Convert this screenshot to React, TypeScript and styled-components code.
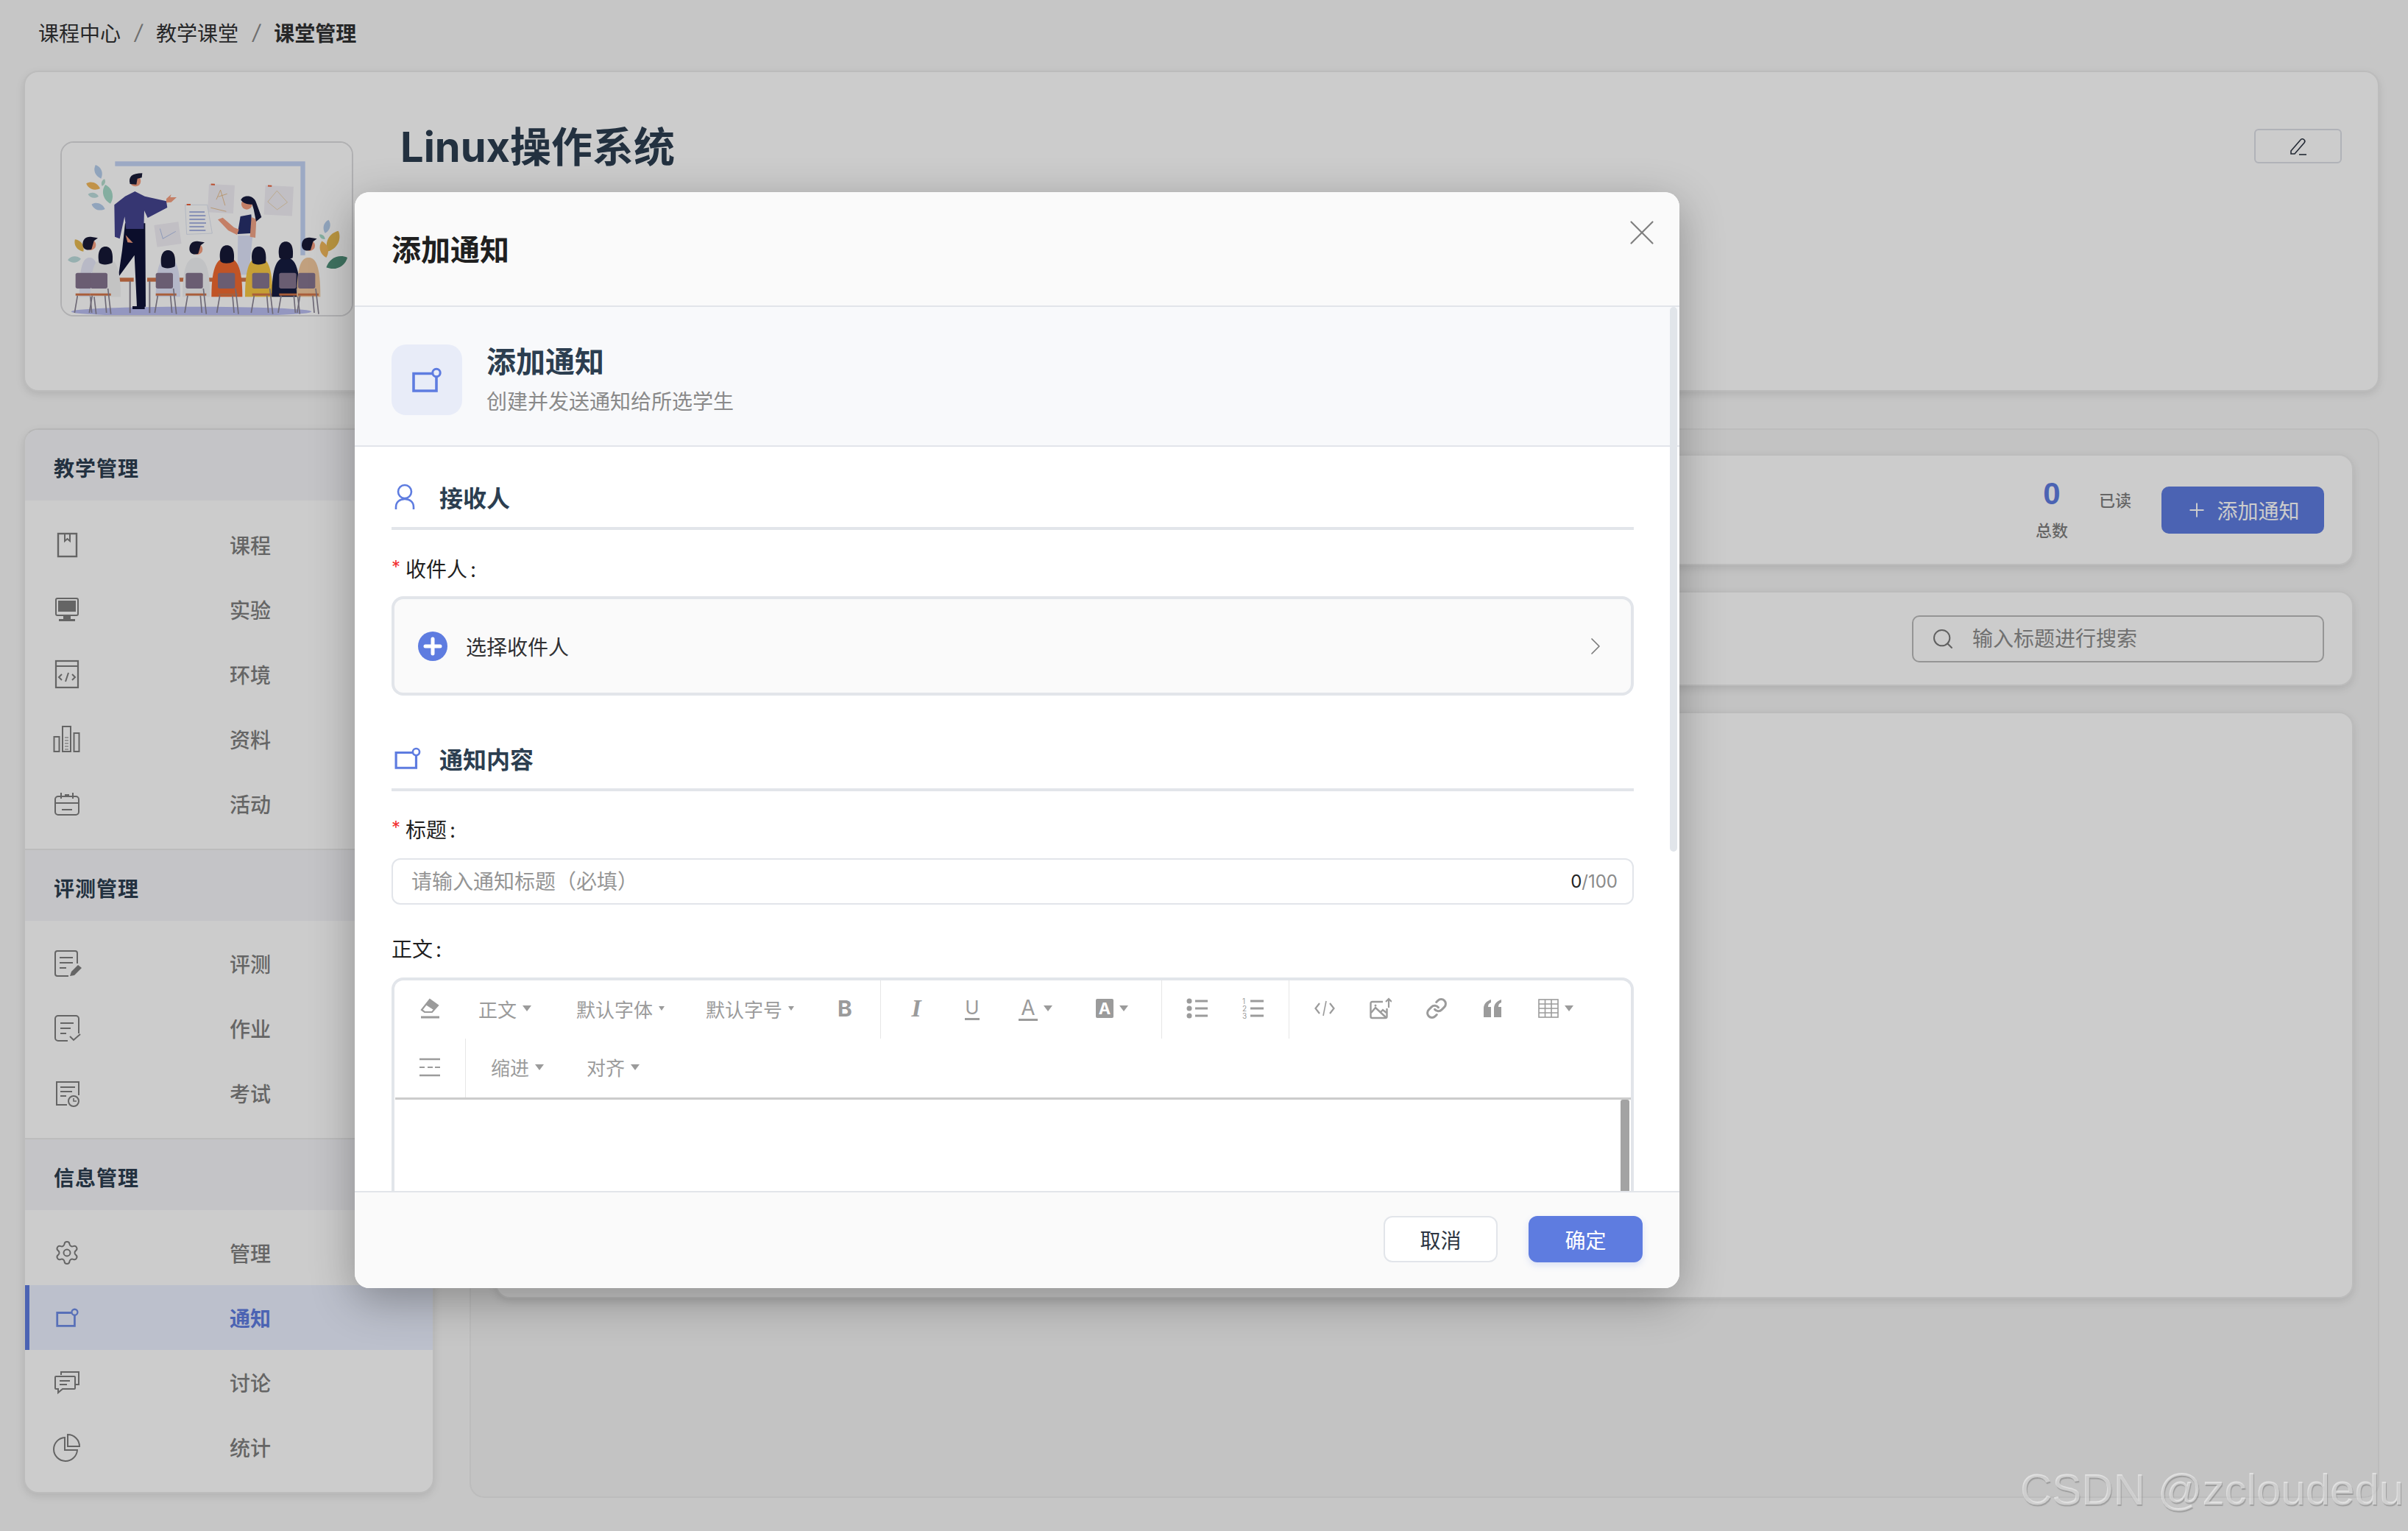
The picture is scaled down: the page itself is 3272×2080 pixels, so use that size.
import React from 'react';
import styled, { createGlobalStyle } from 'styled-components';
import { ChevronRight, Link as LinkIcon, Plus, Search, Settings, X } from 'lucide-react';

const BLUE = '#5e7ce0';
const INK = '#2c3e50';
const LINE = '#e2e5ea';
const MUTED = '#7f7f7f';
const TOOL = '#9b9b9b';

const GlobalStyle = createGlobalStyle`
  html, body {
    margin: 0;
    padding: 0;
    background: #f8f8f8;
  }
  * {
    box-sizing: border-box;
  }
  body {
    font-family: Inter, "Noto Sans CJK SC", sans-serif;
    font-size: 28px;
  }
`;

const NoticeIcon: React.FC<{ w: number; h: number; color?: string }> = ({ w, h, color = BLUE }) => (
  <svg width={w} height={h} viewBox="0 0 40 34" fill="none" stroke={color} strokeWidth="3.6">
    <path d="M27 8.5H2v23.5h31V13" />
    <circle cx="33" cy="7.5" r="5.2" strokeWidth="3" />
  </svg>
);

const SideIcon: React.FC<{ children: React.ReactNode; $color?: string }> = ({ children, $color = MUTED }) => (
  <svg width="40" height="40" viewBox="0 0 40 40" fill="none" stroke={$color} strokeWidth="2">
    {children}
  </svg>
);

const sideIcons: Record<string, React.ReactNode> = {
  book: (
    <SideIcon>
      <rect x="8" y="5" width="25" height="31" strokeWidth="2.4" />
      <path d="M17 5v10l3.5-3 3.5 3V5" />
    </SideIcon>
  ),
  monitor: (
    <SideIcon>
      <rect x="5" y="5" width="30" height="23" rx="2" strokeWidth="2" />
      <rect x="8" y="8" width="24" height="15" fill={MUTED} stroke="none" />
      <rect x="15" y="28" width="10" height="5" fill={MUTED} stroke="none" />
      <rect x="9" y="33" width="22" height="3" fill={MUTED} stroke="none" />
    </SideIcon>
  ),
  code: (
    <SideIcon>
      <rect x="5" y="2" width="30" height="36" strokeWidth="2.2" />
      <path d="M5 9h30" />
      <path d="M13 20l-4 4 4 4M27 20l4 4-4 4M22 18l-4 12" />
    </SideIcon>
  ),
  bars: (
    <SideIcon>
      <rect x="2.5" y="17" width="7" height="20" />
      <rect x="14" y="3" width="11" height="34" />
      <rect x="29.5" y="12" width="7" height="25" />
      <path d="M17 18h5M17 22h5M17 26h5M17 30h5M17 34h5" strokeWidth="1" />
    </SideIcon>
  ),
  calendar: (
    <SideIcon>
      <rect x="4" y="10" width="32" height="25" rx="4" />
      <path d="M12 5v8M28 5v8M17 8h6M4 19h32M13 28h14" />
    </SideIcon>
  ),
  docPen: (
    <SideIcon>
      <path d="M22 37H7a3 3 0 0 1-3-3V6a3 3 0 0 1 3-3h24a3 3 0 0 1 3 3v14" />
      <path d="M10 12h18M10 19h18M10 26h9" />
      <path d="M24 37l2-6 9-9 5 4-10 10z" fill={MUTED} stroke="none" />
    </SideIcon>
  ),
  docCheck: (
    <SideIcon>
      <path d="M21 37H8a4 4 0 0 1-4-4V7a4 4 0 0 1 4-4h24a4 4 0 0 1 4 4v20" />
      <path d="M11 13h18M11 20h14M11 27h8" />
      <path d="M24 31l5 5 9-8" />
    </SideIcon>
  ),
  docClock: (
    <SideIcon>
      <path d="M20 36H6V5h30v18" />
      <path d="M11 12h20M11 18h16M11 24h8" />
      <circle cx="29" cy="31" r="7" />
      <path d="M29 27v4h4" strokeWidth="1.6" />
    </SideIcon>
  ),
  gear: <Settings size={36} strokeWidth={1.3} color={MUTED} />,
  notice: <NoticeIcon w={31} h={26} color="#6f8ce6" />,
  chat: (
    <SideIcon>
      <path d="M12 10V6h24v17h-5" />
      <path d="M5 12h25a1 1 0 0 1 1 1v15a1 1 0 0 1-1 1H14l-6 5v-5H5a1 1 0 0 1-1-1V13a1 1 0 0 1 1-1z" />
      <path d="M10 18h14M10 23h10" />
    </SideIcon>
  ),
  pie: (
    <SideIcon>
      <path d="M17 7a16 16 0 1 0 17 17H17z" />
      <path d="M21 3v16h16A16 16 0 0 0 21 3z" />
    </SideIcon>
  ),
};

type NavGroup = { title: string; items: { label: string; icon: string; active?: boolean }[] };

const navGroups: NavGroup[] = [
  {
    title: '教学管理',
    items: [
      { label: '课程', icon: 'book' },
      { label: '实验', icon: 'monitor' },
      { label: '环境', icon: 'code' },
      { label: '资料', icon: 'bars' },
      { label: '活动', icon: 'calendar' },
    ],
  },
  {
    title: '评测管理',
    items: [
      { label: '评测', icon: 'docPen' },
      { label: '作业', icon: 'docCheck' },
      { label: '考试', icon: 'docClock' },
    ],
  },
  {
    title: '信息管理',
    items: [
      { label: '管理', icon: 'gear' },
      { label: '通知', icon: 'notice', active: true },
      { label: '讨论', icon: 'chat' },
      { label: '统计', icon: 'pie' },
    ],
  },
];

const students = [
  { x: 185, y: 482, top: '#e6e8f8', w: 84, hair: 'short', chair: 128 },
  { x: 250, y: 515, top: '#f4f4f4', w: 124, hair: 'long', chair: 188 },
  { x: 505, y: 530, top: '#e2e5fa', w: 100, hair: 'long', chair: 455 },
  { x: 620, y: 500, top: '#f2f3f5', w: 112, hair: 'short', chair: 577 },
  { x: 745, y: 510, top: '#f06a30', w: 126, hair: 'long', chair: 708 },
  { x: 875, y: 515, top: '#f7c744', w: 112, hair: 'long', chair: 848 },
  { x: 985, y: 495, top: '#161c40', w: 114, hair: 'long', chair: 958 },
  { x: 1078, y: 485, top: '#f2c99e', w: 96, hair: 'short', chair: 1035 },
];

const Leaf: React.FC<{ x: number; y: number; r: number; l: number; c: string }> = ({ x, y, r, l, c }) => (
  <path
    transform={`translate(${x} ${y}) rotate(${r})`}
    d={`M0 0C${l * 0.3} ${-l * 0.32} ${l * 0.75} ${-l * 0.3} ${l} 0C${l * 0.75} ${l * 0.3} ${l * 0.3} ${l * 0.32} 0 0z`}
    fill={c}
  />
);

const Poster: React.FC<{ x: number; y: number; w: number; h: number; r: number; children?: React.ReactNode }> = ({ x, y, w, h, r, children }) => (
  <g transform={`rotate(${r} ${x} ${y})`}>
    <rect x={x} y={y} width={w} height={h} fill="#f2eff6" />
    {children}
  </g>
);

const Classroom: React.FC = () => (
  <svg width="100%" height="100%" viewBox="72 72 1182 702" preserveAspectRatio="none">
    <rect x="66" y="66" width="1194" height="714" fill="#ffffff" />
    <path d="M289 148h775v382h-19V167H289z" fill="#c4d4f6" />
    <ellipse cx="600" cy="760" rx="490" ry="20" fill="#b9bdf0" />
    <Leaf x={232} y={218} r={-112} l={60} c="#b5cdec" />
    <Leaf x={228} y={258} r={-160} l={60} c="#f2b85c" />
    <Leaf x={236} y={248} r={-70} l={30} c="#b4dccd" />
    <Leaf x={270} y={320} r={-105} l={80} c="#a5dac8" />
    <Leaf x={222} y={290} r={-170} l={44} c="#bcdcdc" />
    <Leaf x={248} y={342} r={-160} l={58} c="#b5cdec" />
    <Leaf x={1145} y={440} r={-75} l={56} c="#b5cdec" />
    <Leaf x={1155} y={515} r={-62} l={95} c="#e6b950" />
    <Leaf x={1150} y={540} r={-105} l={70} c="#f2b85c" />
    <Leaf x={1150} y={580} r={-25} l={95} c="#4f8f78" />
    <Leaf x={1145} y={465} r={-140} l={30} c="#a5dac8" />
    <Leaf x={160} y={515} r={-125} l={60} c="#e6b950" />
    <Leaf x={150} y={545} r={175} l={54} c="#bcdcdc" />
    <Poster x={672} y={240} w={105} h={115} r={3}>
      <rect x="680" y="238" width="16" height="6" fill="#e9613a" />
      <path d="M705 302l15-40 22 62M712 290l36-14M684 336l64 12" stroke="#e0a860" strokeWidth="2" fill="none" />
    </Poster>
    <Poster x={902} y={245} w={115} h={120} r={3}>
      <rect x="912" y="244" width="16" height="6" fill="#e9613a" />
      <path d="M950 265l45 45-40 32-40-30z" stroke="#e8c890" strokeWidth="2" fill="none" />
    </Poster>
    <Poster x={448} y={408} w={100} h={90} r={-8}>
      <path d="M470 425l6 42 56-22" stroke="#b5c4e8" strokeWidth="3" fill="none" />
    </Poster>
    <g>
      <path d="M575 325l90 0 20 116-104 4z" fill="#ffffff" stroke="#cfd8ec" strokeWidth="2" />
      <rect x="581" y="321" width="16" height="6" fill="#e9613a" />
      <path d="M592 354h62M592 369h66M592 384h64M592 399h68M592 414h60M592 429h66" stroke="#8f9fdc" strokeWidth="5" />
    </g>
    <path d="M330 400h82l2 340h-36l-10-210-66 90 16-110z" fill="#0e1236" />
    <path d="M330 290l40-20 40 20 88 20 4 26-80 42-14-30-2 75h-72l-6-50-20 90-20-8-2-130z" fill="#44448f" />
    <circle cx="372" cy="228" r="22" fill="#f59f80" />
    <path d="M350 240c-8-30 8-44 50-44l-2 18-18 4-4 24z" fill="#1a1c38" />
    <path d="M498 300l20-18-4 12 26 0-22 20-20 2z" fill="#f59f80" />
    <path d="M332 448l30 32-22-2z" fill="#f59f80" />
    <path d="M360 738h50v12h-50z" fill="#0e1236" />
    <path d="M790 450h60l-16 160h-46z" fill="#dfe4fa" />
    <path d="M800 372l44-8 6 76-62 4z" fill="#27306c" />
    <path d="M708 385l20-8 46 40 20 8-8 22-36-18z" fill="#f59f80" />
    <path d="M845 375l20 8-4 76-22-4z" fill="#f0a488" />
    <circle cx="826" cy="322" r="22" fill="#f59f80" />
    <path d="M802 305c8-20 50-24 62 10l22 60-22 18-10-50-6-20c-16 0-34-2-46-18z" fill="#161a3c" />
    <rect x="298" y="622" width="67" height="16" fill="#d4764a" />
    <rect x="420" y="622" width="410" height="16" fill="#d4764a" />
    <path d="M350 636v130M430 636v130" stroke="#8a8494" strokeWidth="6" />
    {students.map((s) => (
      <g key={s.x}>
        <path d={`M${s.x - s.w / 2} 700c0-130 ${s.w * 0.2}-160 ${s.w / 2}-160s${s.w / 2} 30 ${s.w / 2} 160z`} fill={s.top} />
        <circle cx={s.x + 4} cy={s.y + 6} r="22" fill="#f59f80" />
        {s.hair === 'short' ? (
          <path d={`M${s.x - 28} ${s.y + 6}c0-26 16-36 38-32l24 4-16 12-10 34c-20 6-34 0-36-18z`} fill="#181a36" />
        ) : (
          <path d={`M${s.x - 26} ${s.y + 46}c-8-34 0-66 26-66s32 30 28 66c-18 10-44 10-54 0z`} fill="#161836" />
        )}
        <rect x={s.chair} y="602" width="70" height="64" rx="8" fill="#85758f" />
        <rect x={s.chair} y="686" width="84" height="9" fill="#d4764a" />
        <path d={`M${s.chair + 8} 695l-12 70M${s.chair + 72} 666l12 104M${s.chair + 60} 695l6 70`} stroke="#8a8494" strokeWidth="5" fill="none" />
      </g>
    ))}
  </svg>
);

const Page = styled.div`
  width: 3272px;
  height: 2080px;
  padding: 0 39px 0 32px;
  overflow: hidden;
  position: relative;
  background: #f8f8f8;
`;

const Crumbs = styled.nav`
  height: 96px;
  padding: 0 0 8px 20px;
  display: flex;
  align-items: center;
  color: #303133;
  font-size: 28px;
`;

const CrumbSep = styled.span`
  margin: 0 19px;
  color: #8a8a8a;
  font-style: italic;
`;

const CrumbCurrent = styled.span`
  font-weight: 600;
`;

const CourseCard = styled.section`
  height: 436px;
  border: 2px solid #ebebeb;
  border-radius: 20px;
  background: #fff;
  box-shadow: 0 4px 12px rgba(0, 0, 0, 0.1);
  padding: 94px 49px 0 48px;
  display: flex;
  align-items: flex-start;
`;

const Cover = styled.div`
  width: 398px;
  height: 238px;
  border: 2px solid #dddddf;
  border-radius: 18px;
  overflow: hidden;
  flex: none;
`;

const CourseTitle = styled.h1`
  margin: -28px 0 0 64px;
  flex: 1;
  font-size: 56px;
  line-height: 72px;
  font-weight: 700;
  color: ${INK};
`;

const EditButton = styled.button`
  width: 119px;
  height: 47px;
  margin-top: -17px;
  border: 2px solid #dcdfe6;
  border-radius: 6px;
  background: #fff;
  display: flex;
  align-items: center;
  justify-content: center;
  padding: 0;
`;

const MainRow = styled.div`
  margin-top: 50px;
  height: 1453px;
  display: flex;
  gap: 48px;
  align-items: flex-start;
`;

const Sidebar = styled.aside`
  width: 558px;
  flex: none;
  height: 1447px;
  border: 2px solid #ebebeb;
  border-top-color: #e4e4e4;
  border-radius: 20px;
  background: #fff;
  box-shadow: 0 4px 12px rgba(0, 0, 0, 0.1);
  overflow: hidden;
`;

const NavBlock = styled.div<{ $last?: boolean }>`
  padding-bottom: ${(p) => (p.$last ? 0 : 17)}px;
  border-bottom: ${(p) => (p.$last ? 'none' : '2px solid #ebebeb')};
`;

const NavTitle = styled.div<{ $first?: boolean }>`
  height: 96px;
  padding: 6px 0 0 39px;
  display: flex;
  align-items: center;
  background: #f5f6f9;
  font-size: 28px;
  letter-spacing: 1px;
  font-weight: 600;
  color: ${INK};
  margin-bottom: ${(p) => (p.$first ? 16 : 14)}px;
`;

const NavItem = styled.div<{ $active?: boolean }>`
  height: 88px;
  display: grid;
  grid-template-columns: 40px 1fr;
  column-gap: 201px;
  align-items: center;
  padding-left: ${(p) => (p.$active ? 31 : 37)}px;
  border-left: ${(p) => (p.$active ? `6px solid #5e7ce0` : 'none')};
  background: ${(p) => (p.$active ? '#ebf0ff' : 'transparent')};
  color: ${(p) => (p.$active ? BLUE : MUTED)};
  font-size: 28px;
  font-weight: ${(p) => (p.$active ? 600 : 500)};
`;

const NavGlyph = styled.span`
  width: 40px;
  height: 40px;
  display: flex;
  align-items: center;
  justify-content: center;
`;

const ContentPanel = styled.main`
  flex: 1;
  height: 1453px;
  background: #f4f4f4;
  border: 2px solid #ebebeb;
  border-radius: 20px;
  padding: 33px 33px 0 33px;
  display: flex;
  flex-direction: column;
  gap: 35px;
`;

const PanelCard = styled.div<{ $h: number }>`
  height: ${(p) => p.$h}px;
  flex: none;
  background: #fff;
  border: 2px solid #ebebeb;
  border-radius: 20px;
  box-shadow: 0 4px 12px rgba(0, 0, 0, 0.1);
  padding-right: 38px;
  display: flex;
  align-items: center;
  justify-content: flex-end;
`;

const StatBlock = styled.div`
  width: 60px;
  margin-top: -1px;
  display: flex;
  flex-direction: column;
  align-items: center;
  gap: 12px;
`;

const StatValue = styled.div`
  font-size: 42px;
  line-height: 46px;
  font-weight: 700;
  color: ${BLUE};
  font-family: "Liberation Sans", sans-serif;
`;

const StatLabel = styled.div<{ $raised?: boolean }>`
  font-size: 22px;
  line-height: 30px;
  font-weight: 500;
  color: ${MUTED};
  white-space: nowrap;
  margin: ${(p) => (p.$raised ? '0 41px 26px 34px' : 0)};
`;

const AddButton = styled.button`
  width: 221px;
  height: 64px;
  border: none;
  border-radius: 10px;
  background: ${BLUE};
  color: #fff;
  font: inherit;
  font-size: 28px;
  padding: 0;
  display: flex;
  align-items: center;
  justify-content: center;
  gap: 12px;
`;

const SearchBox = styled.label`
  width: 560px;
  height: 64px;
  border: 2px solid #bbbbbb;
  border-radius: 10px;
  background: #fff;
  display: flex;
  align-items: center;
  padding-left: 24px;
  gap: 24px;
`;

const SearchInput = styled.input`
  flex: 1;
  min-width: 0;
  border: none;
  background: transparent;
  outline: none;
  padding: 0;
  font: inherit;
  font-size: 28px;
  &::placeholder {
    color: #8c8c8c;
    opacity: 1;
  }
`;

const Overlay = styled.div`
  position: absolute;
  inset: 0;
  background: rgba(0, 0, 0, 0.2);
`;

const Modal = styled.div`
  position: absolute;
  left: 482px;
  top: 261px;
  width: 1800px;
  height: 1489px;
  border-radius: 20px;
  background: #fff;
  box-shadow: 0 16px 60px rgba(0, 0, 0, 0.3);
  overflow: hidden;
  display: flex;
  flex-direction: column;
`;

const ModalHeader = styled.header`
  height: 156px;
  flex: none;
  border-bottom: 2px solid ${LINE};
  background: #fafafa;
  padding: 0 22px 0 50px;
  display: flex;
  align-items: flex-start;
  justify-content: space-between;
`;

const ModalTitle = styled.h2`
  margin: 51px 0 0;
  font-size: 40px;
  line-height: 56px;
  font-weight: 600;
  color: #1f1f1f;
`;

const CloseGlyph = styled.span`
  margin-top: 26px;
  color: #7f7f7f;
  display: flex;
`;

const ModalBody = styled.div`
  flex: 1;
  min-height: 0;
  overflow: hidden;
  position: relative;
`;

const ScrollThumb = styled.div`
  position: absolute;
  top: 0;
  right: 3px;
  width: 10px;
  height: 740px;
  border-radius: 6px;
  background: #e1e5ea;
`;

const Hero = styled.div`
  height: 190px;
  padding: 51px 0 0 50px;
  border-bottom: 2px solid ${LINE};
  background: #f8f9fb;
  display: flex;
  align-items: flex-start;
  gap: 33px;
`;

const HeroIcon = styled.div`
  width: 96px;
  height: 96px;
  border-radius: 20px;
  background: #e8ecf8;
  display: flex;
  align-items: center;
  justify-content: center;
  flex: none;
`;

const HeroText = styled.div`
  display: flex;
  flex-direction: column;
  margin-top: -4px;
`;

const HeroTitle = styled.div`
  font-size: 40px;
  line-height: 56px;
  font-weight: 600;
  color: ${INK};
`;

const HeroSub = styled.div`
  font-size: 28px;
  line-height: 40px;
  margin-top: 6px;
  color: #8a8a8a;
`;

const Form = styled.div`
  padding: 0 62px 0 50px;
`;

const SectionHead = styled.div<{ $top: number }>`
  margin-top: ${(p) => p.$top}px;
  height: 83px;
  padding-bottom: 4px;
  border-bottom: 4px solid ${LINE};
  display: flex;
  align-items: center;
`;

const SectionIcon = styled.span`
  width: 65px;
  flex: none;
  display: flex;
  padding-left: 4px;
`;

const SectionTitle = styled.span`
  font-size: 32px;
  font-weight: 600;
  color: ${INK};
`;

const FieldLabel = styled.div<{ $top: number }>`
  margin-top: ${(p) => p.$top}px;
  height: 40px;
  line-height: 40px;
  display: flex;
  font-size: 28px;
  color: #1f1f1f;
`;

const Star = styled.span`
  color: #f23030;
  width: 19px;
  flex: none;
  font-size: 24px;
  line-height: 34px;
`;

const Colon = styled.span`
  margin-left: 4px;
`;

const Picker = styled.div<{ $top: number }>`
  margin-top: ${(p) => p.$top}px;
  height: 135px;
  border: 4px solid ${LINE};
  border-radius: 16px;
  background: #fafafa;
  padding: 0 28px 0 32px;
  display: flex;
  align-items: center;
  gap: 25px;
  color: #303133;
`;

const PickerText = styled.span`
  flex: 1;
`;

const TitleInputWrap = styled.div`
  margin-top: 18px;
  height: 63px;
  border: 2px solid ${LINE};
  border-radius: 12px;
  padding: 0 20px 0 25px;
  display: flex;
  align-items: center;
`;

const TitleInput = styled.input`
  flex: 1;
  min-width: 0;
  border: none;
  outline: none;
  padding: 0;
  font: inherit;
  font-size: 28px;
  &::placeholder {
    color: #959595;
    opacity: 1;
  }
`;

const Counter = styled.span`
  font-size: 24px;
  color: #8a8a8a;
`;

const CounterNow = styled.span`
  color: #222;
`;

const Editor = styled.div`
  margin-top: 18px;
  height: 560px;
  border: 4px solid ${LINE};
  border-bottom: none;
  border-radius: 16px 16px 0 0;
  position: relative;
`;

const ToolRow = styled.div<{ $h: number }>`
  height: ${(p) => p.$h}px;
  padding-left: 10px;
  display: flex;
  align-items: stretch;
`;

const ToolSep = styled.span`
  width: 1px;
  background: #e6e6e6;
  margin: 0 10px;
  flex: none;
`;

const ToolButton = styled.span`
  width: 76px;
  flex: none;
  padding-bottom: 3px;
  display: flex;
  align-items: center;
  justify-content: center;
  color: ${TOOL};
`;

const ToolDrop = styled.span<{ $w: number; $pad?: number }>`
  width: ${(p) => p.$w}px;
  flex: none;
  padding-left: ${(p) => p.$pad ?? 28}px;
  padding-bottom: 3px;
  display: flex;
  align-items: center;
  gap: 8px;
  font-size: 26px;
  color: ${TOOL};
`;

const Caret = styled.span<{ $small?: boolean }>`
  width: 0;
  height: 0;
  flex: none;
  border-style: solid;
  border-color: ${TOOL} transparent transparent;
  border-width: ${(p) => (p.$small ? '6px 4px 0' : '8px 6px 0')};
`;

const BoldGlyph = styled.span`
  font-size: 30px;
  font-weight: 700;
`;

const ItalicGlyph = styled.span`
  font-family: "Liberation Serif", serif;
  font-size: 34px;
  font-style: italic;
  font-weight: 700;
`;

const UnderGlyph = styled.span`
  font-size: 26px;
  line-height: 28px;
  border-bottom: 3px solid ${TOOL};
`;

const ColorGlyph = styled.span`
  width: 26px;
  text-align: center;
  font-size: 28px;
  line-height: 30px;
  border-bottom: 3px solid ${TOOL};
`;

const FillGlyph = styled.span`
  width: 24px;
  height: 26px;
  border-radius: 2px;
  background: ${TOOL};
  color: #fff;
  font-size: 22px;
  font-weight: 700;
  line-height: 26px;
  text-align: center;
`;

const EditorText = styled.div`
  border-top: 3px solid #cccccc;
  margin-left: 1px;
  height: 400px;
  position: relative;
`;

const EditorThumb = styled.div`
  position: absolute;
  top: 0;
  right: 2px;
  width: 12px;
  height: 300px;
  border-radius: 3px 3px 0 0;
  background: #a3a3a3;
`;

const ModalFooter = styled.footer`
  height: 132px;
  flex: none;
  border-top: 2px solid ${LINE};
  background: #fafafa;
  padding: 32px 50px 0 0;
  display: flex;
  justify-content: flex-end;
  align-items: flex-start;
  gap: 42px;
`;

const FooterButton = styled.button<{ $primary?: boolean }>`
  width: 155px;
  height: 63px;
  border: ${(p) => (p.$primary ? 'none' : `2px solid ${LINE}`)};
  border-radius: 12px;
  background: ${(p) => (p.$primary ? BLUE : '#fff')};
  color: ${(p) => (p.$primary ? '#fff' : '#2c3442')};
  box-shadow: ${(p) => (p.$primary ? '0 4px 10px rgba(94, 124, 224, 0.2)' : 'none')};
  font: inherit;
  font-size: 28px;
  padding: 0;
`;

const Watermark = styled.div`
  position: absolute;
  left: 2745px;
  top: 1989px;
  font-family: "Liberation Sans", sans-serif;
  font-size: 60px;
  line-height: 70px;
  white-space: nowrap;
  color: rgba(255, 255, 255, 0.5);
  text-shadow: 1px 2px 1px rgba(0, 0, 0, 0.2);
`;

const Svg28: React.FC<{ children: React.ReactNode; w?: number; h?: number }> = ({ children, w = 30, h = 30 }) => (
  <svg width={w} height={h} viewBox={`0 0 ${w} ${h}`} fill="none" stroke={TOOL} strokeWidth="2.4">
    {children}
  </svg>
);

const EraserIcon = () => (
  <Svg28>
    <path d="M4 17L15 3l11 8-8 9H8z" fill="none" strokeWidth="2.2" />
    <path d="M10 10l5-7 11 8-5 6z" fill={TOOL} stroke={TOOL} strokeWidth="1" />
    <path d="M3 27h25" strokeWidth="3" />
  </Svg28>
);

const BreakIcon = () => (
  <Svg28>
    <path d="M1 4h28M1 26h28" strokeWidth="2.4" />
    <path d="M1 15h7M12 15h7M22 15h7" strokeWidth="2" />
  </Svg28>
);

const BulletIcon = () => (
  <Svg28>
    <circle cx="4" cy="5" r="3.5" fill={TOOL} stroke="none" />
    <circle cx="4" cy="15" r="3.5" fill={TOOL} stroke="none" />
    <circle cx="4" cy="25" r="3.5" fill={TOOL} stroke="none" />
    <path d="M12 5h17M12 15h17M12 25h17" strokeWidth="3" />
  </Svg28>
);

const NumberIcon = () => (
  <Svg28>
    <text x="0" y="9" fontSize="10" fill={TOOL} stroke="none">1</text>
    <text x="0" y="19" fontSize="10" fill={TOOL} stroke="none">2</text>
    <text x="0" y="29" fontSize="10" fill={TOOL} stroke="none">3</text>
    <path d="M11 5h18M11 15h18M11 25h18" strokeWidth="3" />
  </Svg28>
);

const CodeIcon = () => (
  <Svg28 w={28} h={22}>
    <path d="M7 4L1.5 11 7 18M21 4l5.500 7-5.500 7" strokeWidth="2.2" />
    <path d="M16 1l-4 20" strokeWidth="1.6" />
  </Svg28>
);

const ImageUpIcon = () => (
  <Svg28>
    <path d="M18 6H3.500a2 2 0 0 0-2 2v18a2 2 0 0 0 2 2h18a2 2 0 0 0 2-2V15" />
    <path d="M2 21l6-7 14 13M14 21l4-4 5 4" />
    <circle cx="8" cy="11" r="1.500" fill={TOOL} stroke="none" />
    <path d="M26 14V2M22 6l4-4 4 4" strokeWidth="2.2" />
  </Svg28>
);

const QuoteIcon = () => (
  <Svg28 w={26} h={26}>
    <path d="M1 25V13C1 7 5 3 11 1v4c-3 1-4 3-4 6h4v14zM15 25V13c0-6 4-10 10-12v4c-3 1-4 3-4 6h4v14z" fill={TOOL} stroke="none" />
  </Svg28>
);

const TableIcon = () => (
  <Svg28 w={28} h={26}>
    <rect x="1" y="1" width="26" height="24" strokeWidth="1.6" />
    <path d="M1 7h26M1 13h26M1 19h26M9.500 1v24M18 1v24" strokeWidth="1.6" />
  </Svg28>
);

const App: React.FC = () => (
  <>
    <GlobalStyle />
    <Page>
      <Crumbs>
        课程中心<CrumbSep>/</CrumbSep>教学课堂<CrumbSep>/</CrumbSep>
        <CrumbCurrent>课堂管理</CrumbCurrent>
      </Crumbs>
      <CourseCard>
        <Cover>
          <Classroom />
        </Cover>
        <CourseTitle>Linux操作系统</CourseTitle>
        <EditButton aria-label="编辑">
          <svg width="26" height="26" viewBox="0 0 26 26" fill="none" stroke="#2c3442" strokeWidth="1.6">
            <path d="M3 19L16 4a3 3 0 0 1 5 4L8 23H3z" />
            <path d="M14 24h10" />
          </svg>
        </EditButton>
      </CourseCard>
      <MainRow>
        <Sidebar>
          {navGroups.map((group, i) => (
            <NavBlock key={group.title} $last={i === navGroups.length - 1}>
              <NavTitle $first={i === 0}>{group.title}</NavTitle>
              {group.items.map((item) => (
                <NavItem key={item.label} $active={item.active}>
                  <NavGlyph>{sideIcons[item.icon]}</NavGlyph>
                  <span>{item.label}</span>
                </NavItem>
              ))}
            </NavBlock>
          ))}
        </Sidebar>
        <ContentPanel>
          <PanelCard $h={151}>
            <StatBlock>
              <StatValue>0</StatValue>
              <StatLabel>总数</StatLabel>
            </StatBlock>
            <StatLabel $raised>已读</StatLabel>
            <AddButton>
              <Plus size={30} strokeWidth={1.6} />
              添加通知
            </AddButton>
          </PanelCard>
          <PanelCard $h={129}>
            <SearchBox>
              <Search size={32} strokeWidth={1.5} color="#7a7a7a" />
              <SearchInput placeholder="输入标题进行搜索" />
            </SearchBox>
          </PanelCard>
          <PanelCard $h={797} />
        </ContentPanel>
      </MainRow>
      <Overlay />
      <Modal>
        <ModalHeader>
          <ModalTitle>添加通知</ModalTitle>
          <CloseGlyph>
            <X size={58} strokeWidth={0.9} />
          </CloseGlyph>
        </ModalHeader>
        <ModalBody>
          <Hero>
            <HeroIcon>
              <NoticeIcon w={40} h={34} />
            </HeroIcon>
            <HeroText>
              <HeroTitle>添加通知</HeroTitle>
              <HeroSub>创建并发送通知给所选学生</HeroSub>
            </HeroText>
          </Hero>
          <Form>
            <SectionHead $top={30}>
              <SectionIcon>
                <svg width="28" height="36" viewBox="0 0 28 36" fill="none" stroke={BLUE} strokeWidth="2.6">
                  <circle cx="14" cy="11" r="9" />
                  <path d="M2 35v-3c0-7 5-11 12-11s12 4 12 11v3" />
                </svg>
              </SectionIcon>
              <SectionTitle>接收人</SectionTitle>
            </SectionHead>
            <FieldLabel $top={34}>
              <Star>*</Star>收件人<Colon>:</Colon>
            </FieldLabel>
            <Picker $top={16}>
              <svg width="40" height="40" viewBox="0 0 40 40">
                <circle cx="20" cy="20" r="20" fill={BLUE} />
                <path d="M20 10v20M10 20h20" stroke="#fff" strokeWidth="5" strokeLinecap="round" />
              </svg>
              <PickerText>选择收件人</PickerText>
              <ChevronRight size={40} strokeWidth={1} color="#7a7a7a" />
            </Picker>
            <SectionHead $top={47}>
              <SectionIcon>
                <NoticeIcon w={36} h={30} />
              </SectionIcon>
              <SectionTitle>通知内容</SectionTitle>
            </SectionHead>
            <FieldLabel $top={33}>
              <Star>*</Star>标题<Colon>:</Colon>
            </FieldLabel>
            <TitleInputWrap>
              <TitleInput placeholder="请输入通知标题（必填）" />
              <Counter>
                <CounterNow>0</CounterNow>/100
              </Counter>
            </TitleInputWrap>
            <FieldLabel $top={41}>
              正文<Colon>:</Colon>
            </FieldLabel>
            <Editor>
              <ToolRow $h={79}>
                <ToolButton>
                  <EraserIcon />
                </ToolButton>
                <ToolDrop $w={133}>
                  正文<Caret />
                </ToolDrop>
                <ToolDrop $w={176}>
                  默认字体<Caret $small />
                </ToolDrop>
                <ToolDrop $w={179}>
                  默认字号<Caret $small />
                </ToolDrop>
                <ToolButton>
                  <BoldGlyph>B</BoldGlyph>
                </ToolButton>
                <ToolSep />
                <ToolButton>
                  <ItalicGlyph>I</ItalicGlyph>
                </ToolButton>
                <ToolButton>
                  <UnderGlyph>U</UnderGlyph>
                </ToolButton>
                <ToolDrop $w={104} $pad={25}>
                  <ColorGlyph>A</ColorGlyph>
                  <Caret />
                </ToolDrop>
                <ToolDrop $w={105} $pad={26}>
                  <FillGlyph>A</FillGlyph>
                  <Caret />
                </ToolDrop>
                <ToolSep />
                <ToolButton>
                  <BulletIcon />
                </ToolButton>
                <ToolButton>
                  <NumberIcon />
                </ToolButton>
                <ToolSep />
                <ToolButton>
                  <CodeIcon />
                </ToolButton>
                <ToolButton>
                  <ImageUpIcon />
                </ToolButton>
                <ToolButton>
                  <LinkIcon size={30} strokeWidth={2.4} />
                </ToolButton>
                <ToolButton>
                  <QuoteIcon />
                </ToolButton>
                <ToolDrop $w={100} $pad={24}>
                  <TableIcon />
                  <Caret />
                </ToolDrop>
              </ToolRow>
              <ToolRow $h={80}>
                <ToolButton>
                  <BreakIcon />
                </ToolButton>
                <ToolSep />
                <ToolDrop $w={126} $pad={24}>
                  缩进<Caret />
                </ToolDrop>
                <ToolDrop $w={128}>
                  对齐<Caret />
                </ToolDrop>
              </ToolRow>
              <EditorText>
                <EditorThumb />
              </EditorText>
            </Editor>
          </Form>
          <ScrollThumb />
        </ModalBody>
        <ModalFooter>
          <FooterButton>取消</FooterButton>
          <FooterButton $primary>确定</FooterButton>
        </ModalFooter>
      </Modal>
      <Watermark>CSDN @zcloudedu</Watermark>
    </Page>
  </>
);

export default App;
